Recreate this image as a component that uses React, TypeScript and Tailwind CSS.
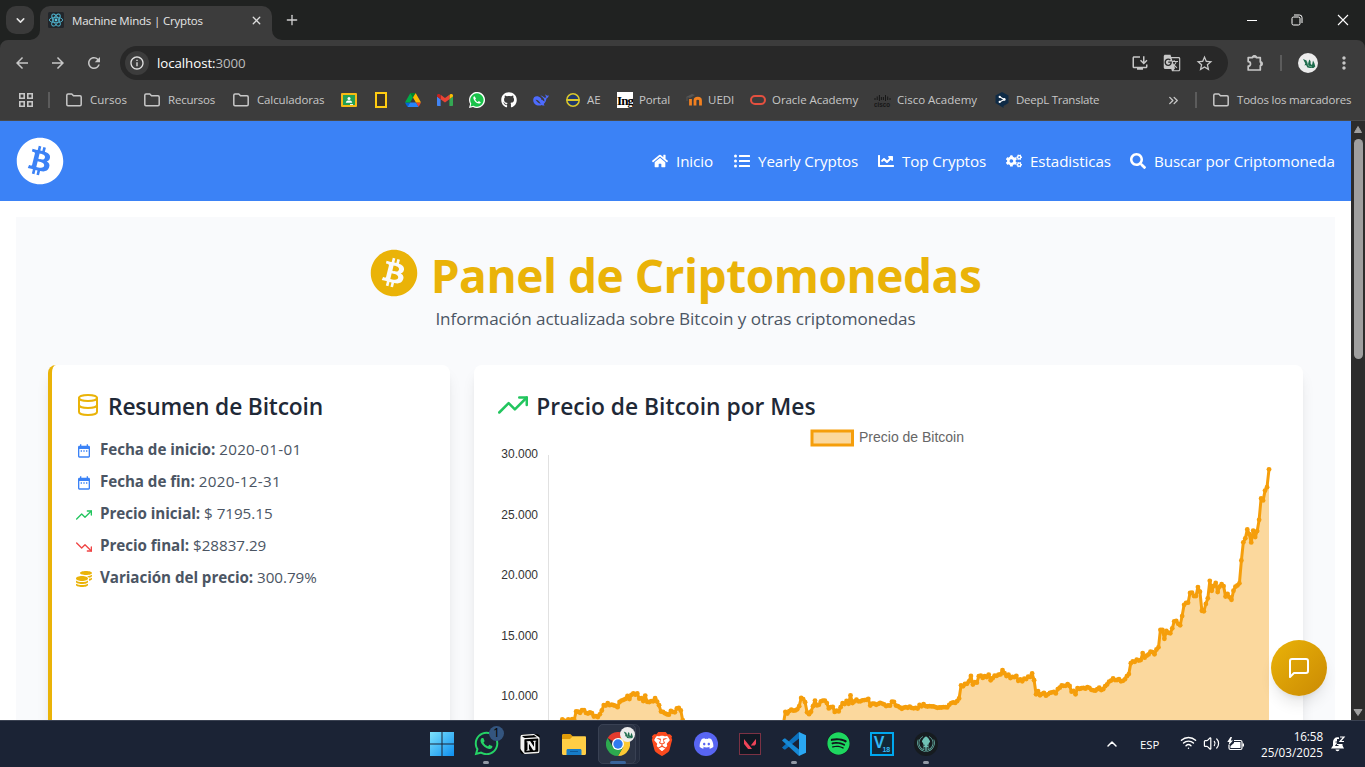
import React from 'react';
import {
  FaBitcoin, FaHome, FaListUl, FaChartLine, FaCogs, FaSearch, FaCoins, FaWhatsapp, FaGithub, FaDiscord, FaSpotify, FaGitkraken,
} from 'react-icons/fa';
import { FiTrendingUp, FiTrendingDown, FiMessageSquare } from 'react-icons/fi';
import {
  MdDateRange, MdArrowBack, MdArrowForward, MdRefresh, MdInfoOutline, MdInstallDesktop, MdGTranslate, MdStarBorder, MdMoreVert,
} from 'react-icons/md';
import { SiBrave, SiNotion, SiValorant } from 'react-icons/si';
import { Database, ChevronDown, ChevronUp, X, Plus, Wifi, Volume2, ChevronsRight } from 'lucide-react';

/* Daily price of Bitcoin, 2020-01-01 to 2020-12-31 */
const PRICES = [
  7195, 7200, 6985, 7345, 7411, 7411, 7769, 8164, 8080, 7879, 8166, 8038, 8192, 8144, 8828, 8807, 8724, 8929, 8942, 8706, 8657, 8746, 8680, 8406, 8445, 8368, 8597, 8909, 9358, 9316, 9508, 9351,
  9393, 9344, 9293, 9180, 9614, 9729, 9795, 9866, 10117, 9857, 10208, 10327, 10214, 10312, 9889, 9934, 9691, 10142, 9634, 9608, 9686, 9664, 9924, 9650, 9342, 8820, 8785, 8672, 8599,
  8562, 8870, 8788, 8755, 9078, 9123, 8909, 8108, 7924, 7909, 7911, 4971, 5563, 5200, 5393, 5014, 5226, 5239, 6191, 6199, 6186, 5831, 6417, 6734, 6681, 6716, 6469, 6242, 5922, 6430, 6438,
  6606, 6793, 6734, 6868, 6792, 7271, 7176, 7334, 7303, 6865, 6859, 6971, 6845, 6843, 6642, 7117, 7097, 7258, 7189, 6882, 6881, 7117, 7429, 7551, 7569, 7680, 7796, 7807, 8801, 8659,
  8864, 8989, 8897, 8912, 9004, 9269, 9951, 9842, 9594, 8757, 8602, 8805, 9269, 9733, 9328, 9377, 9670, 9727, 9729, 9523, 9082, 9182, 9209, 8790, 8906, 8835, 9181, 9525, 9440, 9700, 9461,
  10167, 9529, 9656, 9801, 9666, 9665, 9746, 9771, 9795, 9870, 9321, 9481, 9476, 9386, 9450, 9538, 9481, 9412, 9278, 9332, 9304, 9648, 9629, 9313, 9265, 9163, 9045, 9144, 9191, 9138,
  9229, 9123, 9087, 9132, 9074, 9376, 9253, 9428, 9278, 9240, 9277, 9243, 9244, 9193, 9133, 9155, 9159, 9185, 9187, 9164, 9374, 9525, 9581, 9537, 9678, 9906, 10991, 10912, 11100, 11111, 11323,
  11760, 11053, 11246, 11205, 11747, 11780, 11601, 11754, 11676, 11878, 11411, 11584, 11784, 11769, 11866, 11892, 12254, 11991, 11758, 11878, 11593, 11681, 11664, 11774, 11366, 11488, 11323, 11542, 11506, 11711, 11680,
  11971, 11415, 10245, 10511, 10169, 10280, 10369, 10132, 10243, 10363, 10401, 10442, 10323, 10680, 10797, 10975, 10948, 10945, 11094, 10938, 10462, 10539, 10246, 10760, 10693, 10750, 10775, 10710, 10845, 10784,
  10620, 10576, 10549, 10669, 10793, 10604, 10669, 10916, 11064, 11296, 11384, 11556, 11426, 11430, 11503, 11323, 11359, 11484, 11743, 11916, 12823, 12965, 12932, 13108, 13031, 13075, 13654, 13271, 13438, 13546, 13781,
  13737, 13550, 13950, 14133, 15580, 15565, 14834, 15480, 15333, 15290, 15702, 16277, 16318, 16069, 15956, 16716, 17646, 17804, 17817, 18621, 18642, 18370, 18365, 19107, 18733, 17151, 17108, 17717, 18177, 19626,
  18803, 19202, 19445, 18699, 19154, 19345, 19192, 18321, 18554, 18264, 18059, 18804, 19142, 19247, 19417, 21311, 22805, 23138, 23870, 23478, 22803, 23783, 23241, 23736, 24665, 26437, 26272, 27085, 27362, 28837,
];

function PriceChart() {
  const n = PRICES.length;
  const pts = PRICES.map((v, i) => [50.5 + (i * 720.5) / (n - 1), 272.3 - (v - 10000) * 0.0121]);
  const line = pts.map(([x, y]) => `${x.toFixed(1)},${y.toFixed(1)}`).join(' ');
  const ticks: [string, number][] = [['30.000', 33], ['25.000', 94], ['20.000', 154], ['15.000', 215], ['10.000', 275]];
  return (
    <svg width="781" height="400" viewBox="0 0 781 400" className="block shrink-0 font-['Liberation_Sans',Arial,sans-serif]">
      <rect x="314" y="6" width="40.5" height="14" fill="#fbd89d" stroke="#f59e0b" strokeWidth="3" />
      <text x="361" y="17" fontSize="14" fill="#666" textLength="105">Precio de Bitcoin</text>
      {ticks.map(([t, y]) => (
        <text key={t} x="40" y={y} textAnchor="end" fontSize="12" fill="#333">{t}</text>
      ))}
      <path d="M50.5 30V400" stroke="#e1e1e1" />
      <polygon points={`50.5,400 ${line} 771,400`} fill="#f59e0b" fillOpacity="0.4" />
      <polyline points={line} fill="none" stroke="#f59e0b" strokeWidth="3" strokeLinejoin="round" />
      {pts.map(([x, y], i) => <circle key={i} cx={x} cy={y} r="2.4" fill="#f59e0b" />)}
    </svg>
  );
}

const Folder = () => (
  <svg width="16" height="14" viewBox="0 0 16 14" fill="none" stroke="#c7c7c7" strokeWidth="1.5" strokeLinejoin="round">
    <path d="M.8 2.2C.8 1.4 1.3 1 2 1h3.8l1.7 1.8H14c.8 0 1.200.5 1.200 1.200v7.500c0 .8-.4 1.200-1.200 1.200H2c-.8 0-1.200-.4-1.200-1.200Z" />
  </svg>
);

const Puzzle = () => (
  <svg width="18" height="18" viewBox="0 0 18 18" fill="none" stroke="#c7c7c7" strokeWidth="1.700" strokeLinejoin="round" className="ml-[18px] shrink-0">
    <path d="M2.200 3.600H6.500a1.900 1.700 0 0 1 3.800 0h4v4.300a1.700 1.900 0 0 1 0 3.800v4.300H2.200v-3.800a2.300 2.300 0 0 0 0-4.600Z" />
    <path d="M6.500 3.300a1.900 1.700 0 0 1 3.800 0ZM14.600 7.900a1.700 1.900 0 0 1 0 3.800Z" fill="#c7c7c7" strokeWidth=".8" />
  </svg>
);

const Classroom = () => (
  <svg width="16" height="14" viewBox="0 0 16 14">
    <rect width="16" height="14" rx="1" fill="#f5ba15" />
    <rect x="2" y="2" width="12" height="10" fill="#23a055" />
    <circle cx="8" cy="5.500" r="1.500" fill="#fff" />
    <path d="M4.800 9.800c0-1.600 1.500-2.200 3.200-2.200s3.200.6 3.200 2.200Z" fill="#fff" />
    <path d="M9 11h3v1H9z" fill="#e8f5e9" />
  </svg>
);
const Drive = () => (
  <svg width="16" height="14" viewBox="0 0 87.300 78">
    <path d="m6.600 66.850 3.850 6.650c.8 1.400 1.950 2.500 3.300 3.300l13.750-23.800h-27.500c0 1.550.4 3.100 1.200 4.500z" fill="#0066da" />
    <path d="m43.650 25-13.750-23.800c-1.350.8-2.500 1.900-3.300 3.300l-25.400 44a9 9 0 0 0-1.200 4.500h27.500z" fill="#00ac47" />
    <path d="m73.550 76.800c1.350-.8 2.500-1.900 3.300-3.300l1.600-2.750 7.650-13.250c.8-1.400 1.200-2.950 1.200-4.500h-27.500l5.850 11.500z" fill="#ea4335" />
    <path d="m43.650 25 13.750-23.800c-1.350-.8-2.900-1.200-4.500-1.200h-18.500c-1.600 0-3.150.45-4.500 1.200z" fill="#00832d" />
    <path d="m59.800 53h-32.300l-13.750 23.800c1.350.8 2.900 1.200 4.500 1.200h50.800c1.600 0 3.150-.45 4.500-1.200z" fill="#2684fc" />
    <path d="m73.400 26.500-12.700-22c-.8-1.400-1.950-2.500-3.300-3.300l-13.750 23.800 16.150 28h27.450c0-1.550-.4-3.100-1.200-4.500z" fill="#ffba00" />
  </svg>
);
const Gmail = () => (
  <svg width="16" height="12" viewBox="0 0 16 12">
    <path d="M0 2.500V11c0 .6.400 1 1 1h2.600V5.200Z" fill="#4285f4" />
    <path d="M16 2.500V11c0 .6-.4 1-1 1h-2.600V5.200Z" fill="#34a853" />
    <path d="M12.400 1v4.300L16 2.600V1.600c0-1.500-1.700-2.100-2.700-1.300Z" fill="#fbbc04" />
    <path d="M3.600 5.300V.8L8 4.100 12.400.8v4.500L8 8.600Z" fill="#ea4335" />
    <path d="M0 1.600v1l3.600 2.700V1L2.700.3C1.700-.5 0 .1 0 1.600Z" fill="#c5221f" />
  </svg>
);
const WhatsappBadge = () => (
  <svg width="16" height="16" viewBox="0 0 16 16">
    <path d="M0 16l1.100-4A8 8 0 1 1 4 14.900Z" fill="#fff" />
    <path d="M1.500 14.600l.8-2.900a6.700 6.700 0 1 1 2.200 2.100Z" fill="#19c24a" />
    <path d="M5.500 4.300c-.9.200-1.300 1-1.100 2 .5 2.500 2.900 5 5.400 5.300 1 .1 1.800-.4 2-1.300l-2-1.200-.9.900C7.600 9.500 6.700 8.600 6.200 7.400l.8-1Z" fill="#fff" />
  </svg>
);
const DeepSeek = () => (
  <svg width="16" height="12" viewBox="0 0 16 12">
    <path d="M15.700 1.200c-.9.700-1.600.6-2.300 0-.6-.5-.6-.9-1-1 .1 1.400.3 2.200 1 2.900-.5.800-1.500.8-2.400.1C9.800 2.200 8.500 1.800 7.300 1.200c1 1.200 2.300 1.700 3.200 3 .7 1.100 1 2 .9 3.300C9.500 6.700 7.800 3 4.800 2.300 2 1.700.2 3.500.2 6c0 3.200 2.600 5.600 5.800 5.600 1.200 0 2-.3 2.800-.7.900.5 1.900.8 2.900.3-.5-.4-.9-.7-.9-1.300 1.500-1.400 2.500-3.400 2.600-5.500 1.300-.4 2.200-1.500 2.300-3.200ZM7.700 9.700C5.300 9.400 3.900 7 2.500 5.700c2-.3 4.200 2 5.200 4Z" fill="#4d6bfe" fillRule="evenodd" />
    <circle cx="8.800" cy="5" r=".8" fill="#3c3c3c" />
  </svg>
);
const AeLogo = () => (
  <svg width="16" height="16" viewBox="0 0 16 16">
    <circle cx="8" cy="8" r="6.200" fill="#20386b" stroke="#d9c72b" strokeWidth="1.500" />
    <path d="M1.500 8h13" stroke="#d9c72b" strokeWidth="2" />
  </svg>
);
const Moodle = () => (
  <svg width="17" height="12" viewBox="0 0 17 12">
    <path d="M0 3 6 0l3 1-5 3Z" fill="#555" />
    <path d="M1 3v4" stroke="#555" />
    <path d="M4.500 11.500V5M9 11.500V6.500c0-3 5.500-3 5.500 0v5" stroke="#f28020" strokeWidth="2.800" fill="none" />
  </svg>
);
const Cisco = () => (
  <svg width="17" height="13" viewBox="0 0 17 13">
    <path d="M1 4v2M3.200 2.500V6M5.400 1v6M7.400 3v3M9.400 3v3M11.500 1v6M13.700 2.500V6M16 4v2" stroke="#171717" />
    <text x="0" y="12.500" fontSize="7" fontWeight="700" fill="#171717" textLength="16" lengthAdjust="spacingAndGlyphs" fontFamily="Liberation Sans">cisco</text>
  </svg>
);
const DeepL = () => (
  <svg width="14" height="16" viewBox="0 0 14 16">
    <path d="M7 0l6.500 3.600v7.500L8.500 14v2l-2.300-1.400L.5 11.100V3.600Z" fill="#0f2b46" />
    <path d="M4.500 4.700 9.300 7.400 4.500 10.100" stroke="#fff" strokeWidth="1.200" fill="none" />
    <circle cx="9.300" cy="7.400" r="1.300" fill="#fff" /><circle cx="4.700" cy="4.900" r="1.100" fill="#fff" /><circle cx="4.700" cy="9.900" r="1.100" fill="#fff" />
  </svg>
);
const Atom = () => (
  <svg width="16" height="16" viewBox="0 0 16 16">
    <rect width="16" height="16" rx="1.500" fill="#22262b" />
    <g fill="none" stroke="#4fb4cf" strokeWidth=".9">
      <ellipse cx="8" cy="8" rx="6.700" ry="2.700" />
      <ellipse cx="8" cy="8" rx="6.700" ry="2.700" transform="rotate(60 8 8)" />
      <ellipse cx="8" cy="8" rx="6.700" ry="2.700" transform="rotate(120 8 8)" />
    </g>
    <circle cx="8" cy="8" r="1.400" fill="#5cc5e0" />
  </svg>
);
const Dragon = ({ size }: { size: number }) => (
  <svg width={size} height={size} viewBox="0 0 20 20">
    <circle cx="10" cy="10" r="10" fill="#ececec" />
    <path d="M5 6l3.500 1.500L10 11l1.200-4.500L12.500 8l.2 3 1.300 1 1-4.500 1.300 2.500 1 3.500-1.800 1.500H12l-2.500-.5L8 12l-1.500.5.800-2Z" fill="#1d6b4c" />
    <path d="M9 8.500l1.500 4.500 3.500 1" stroke="#9fc8b4" strokeWidth=".6" fill="none" />
  </svg>
);

type Mark = { icon: React.ReactNode; label?: string; box: string };
const MARKS: Mark[] = [
  { icon: <Folder />, label: 'Cursos', box: 'w-[78px] gap-2' },
  { icon: <Folder />, label: 'Recursos', box: 'w-[89px] gap-2 tracking-[-0.2px]' },
  { icon: <Folder />, label: 'Calculadoras', box: 'w-[108px] gap-2 tracking-[-0.13px]' },
  { icon: <Classroom />, box: 'w-[34px]' },
  { icon: <span className="h-4 w-3 border-2 border-[#fc1] bg-[#3c3428]" />, box: 'w-[30px]' },
  { icon: <Drive />, box: 'w-8' },
  { icon: <Gmail />, box: 'w-8' },
  { icon: <WhatsappBadge />, box: 'w-8' },
  { icon: <FaGithub size={16} color="#fff" />, box: 'w-8' },
  { icon: <DeepSeek />, box: 'w-8' },
  { icon: <AeLogo />, label: 'AE', box: 'w-[52px] gap-1.5' },
  { icon: <span className="flex h-4 w-4 items-center justify-center overflow-hidden bg-white font-['Liberation_Serif',serif] text-[13px] font-bold leading-none tracking-[-1px] text-black">Ing</span>, label: 'Portal', box: 'w-[69px] gap-1.5 tracking-[-0.15px]' },
  { icon: <Moodle />, label: 'UEDI', box: 'w-16 gap-[5px]' },
  { icon: <span className="h-2.5 w-4 rounded-full border-2 border-[#e4503f]" />, label: 'Oracle Academy', box: 'w-[124px] gap-1.5 tracking-[-0.06px]' },
  { icon: <Cisco />, label: 'Cisco Academy', box: 'w-[121px] gap-1.5' },
  { icon: <DeepL />, label: 'DeepL Translate', box: 'w-[173px] gap-[7px] tracking-[-0.26px]' },
];

function Browser() {
  return (
    <div className="shrink-0 bg-[#3c3c3c] text-[#c7c7c7]">
      <div className="flex h-10 items-start bg-[#202221] px-1.5">
        <div className="mt-1.5 flex h-7 w-7 items-center justify-center rounded-[10px] bg-[#3a3a3a]">
          <ChevronDown size={13} strokeWidth={2.800} color="#e3e3e3" />
        </div>
        <div className="relative ml-1.5 mt-1.5 flex h-[34px] w-[232px] items-center rounded-t-[10px] bg-[#3c3c3c] pb-1.5 pl-2 pr-2.500">
          <svg className="absolute -left-2.5 bottom-0" width="10" height="10"><path d="M10 0v10H0A10 10 0 0 0 10 0" fill="#3c3c3c" /></svg>
          <svg className="absolute -right-2.5 bottom-0" width="10" height="10"><path d="M0 0v10h10A10 10 0 0 1 0 0" fill="#3c3c3c" /></svg>
          <Atom />
          <span className="ml-2 pt-0.5 text-[11.5px] tracking-[-0.18px] text-[#e6e6e6]">Machine Minds | Cryptos</span>
          <X size={13} strokeWidth={2.400} color="#dcdcdc" className="ml-auto mr-[9px]" />
        </div>
        <Plus size={16} strokeWidth={2} color="#cfcfcf" className="ml-3 mt-3" />
        <div className="ml-auto mr-2.5 mt-[14px] flex items-center gap-[34px]">
          <span className="h-px w-2.5 bg-white" />
          <svg width="12" height="12" viewBox="0 0 12 12" fill="none" stroke="#fff"><rect x="1" y="3" width="8" height="8" rx="1.500" /><path d="M3 1h5.500A2.500 2.500 0 0 1 11 3.500V9" /></svg>
          <svg width="12" height="12" viewBox="0 0 12 12" stroke="#fff" strokeWidth="1.100"><path d="M1 1l10 10M11 1 1 11" /></svg>
        </div>
      </div>
      <div className="relative flex h-10 items-center pl-[13px] pt-1.5">
        <svg className="absolute left-0 top-0" width="8" height="8"><path d="M0 0h8A8 8 0 0 0 0 8" fill="#202221" /></svg>
        <svg className="absolute right-0 top-0" width="8" height="8"><path d="M8 0H0A8 8 0 0 1 8 8" fill="#202221" /></svg>
        <MdArrowBack size={18} />
        <MdArrowForward size={18} className="ml-[18px]" />
        <MdRefresh size={18} className="ml-[18px]" />
        <div className="ml-[17px] flex h-[34px] w-[1108px] items-center rounded-full bg-[#282828] pl-[5px] pr-[14px]">
          <span className="flex h-6 w-6 items-center justify-center rounded-full bg-[#3c3c3c]"><MdInfoOutline size={16} color="#e0e0e0" /></span>
          <span className="ml-2 pt-px text-[13.3px] tracking-[-0.07px] text-[#bdbdbd]"><span className="text-white">localhost:</span>3000</span>
          <span className="ml-auto flex items-center">
            <MdInstallDesktop size={18} className="mr-[14px]" /><MdGTranslate size={18} className="mr-[14px]" /><MdStarBorder size={19} />
          </span>
        </div>
        <Puzzle />
        <span className="ml-4 h-4 w-0.5 bg-[#5c5c5c]" />
        <span className="ml-4"><Dragon size={20} /></span>
        <MdMoreVert size={20} className="ml-4" />
      </div>
      <div className="flex h-[41px] items-center border-b border-[#4a4a4a] pl-[19px] text-[11.5px]">
        <svg width="14" height="14" viewBox="0 0 14 14" fill="none" stroke="#c7c7c7" strokeWidth="1.600"><path d="M.8.800h4.400v4.400H.8zM8.800.800h4.400v4.400H8.800zM.8 8.800h4.400v4.400H.8zM8.800 8.800h4.400v4.400H8.800z" /></svg>
        <span className="ml-[15px] mr-4 h-4 w-0.5 bg-[#5c5c5c]" />
        {MARKS.map((m, i) => (
          <div key={i} className={`flex shrink-0 items-center whitespace-nowrap ${m.box}`}>
            {m.icon}{m.label && <span>{m.label}</span>}
          </div>
        ))}
        <ChevronsRight size={15} strokeWidth={2.200} className="-ml-0.5 shrink-0" />
        <span className="ml-3.5 h-4 w-0.5 shrink-0 bg-[#5c5c5c]" />
        <div className="ml-4 flex items-center gap-2 whitespace-nowrap tracking-[-0.2px]"><Folder /><span>Todos los marcadores</span></div>
      </div>
    </div>
  );
}

const NAV: [React.ReactNode, string, string][] = [
  [<FaHome size={16} />, 'Inicio', 'w-[82px]'],
  [<FaListUl size={16} />, 'Yearly Cryptos', 'w-36'],
  [<FaChartLine size={16} />, 'Top Cryptos', 'w-32'],
  [<FaCogs size={16} />, 'Estadisticas', 'w-[124px]'],
  [<FaSearch size={16} className="shrink-0" />, 'Buscar por Criptomoneda', 'w-[205px]'],
];

const SUMMARY: [React.ReactNode, string, string, string][] = [
  [<MdDateRange size={16} color="#3b82f6" />, 'Fecha de inicio:', '2020-01-01', 'tracking-[0.3px]'],
  [<MdDateRange size={16} color="#3b82f6" />, 'Fecha de fin:', '2020-12-31', 'tracking-[0.3px]'],
  [<FiTrendingUp size={16} color="#22c55e" />, 'Precio inicial:', '$ 7195.15', 'tracking-[-0.03px]'],
  [<FiTrendingDown size={16} color="#ef4444" />, 'Precio final:', '$28837.29', 'tracking-[-0.03px]'],
  [<FaCoins size={16} color="#eab308" />, 'Variación del precio:', '300.79%', 'tracking-[-0.03px]'],
];

function Page() {
  return (
    <div className="flex min-h-0 flex-1 overflow-hidden bg-white">
      <div className="relative h-full w-[1351px] overflow-hidden">
        <header className="flex h-20 items-center justify-between bg-[#3b82f6] px-4 text-white">
          <FaBitcoin size={48} />
          <nav className="flex text-[15.2px] font-medium tracking-[-0.1px]">
            {NAV.map(([icon, label, w]) => (
              <span key={label} className={`flex items-center gap-2 whitespace-nowrap ${w}`}>{icon}<span>{label}</span></span>
            ))}
          </nav>
        </header>
        <main className="m-4 bg-[#f9fafc] p-8">
          <div className="mb-8 flex h-[84px] flex-col items-center">
            <h1 className="flex h-14 items-start gap-[13px] whitespace-nowrap text-[46px] font-bold leading-[53px] tracking-[-0.47px] text-[#eab308]">
              <FaBitcoin size={48} className="shrink-0" />Panel de Criptomonedas
            </h1>
            <p className="pt-px text-[17.1px] leading-7 tracking-[-0.06px] text-[#4b5563]">Información actualizada sobre Bitcoin y otras criptomonedas</p>
          </div>
          <div className="grid grid-cols-3 gap-6">
            <section className="h-[600px] rounded-lg border-l-4 border-[#eab308] bg-white p-6 shadow-lg">
              <h2 className="flex h-9 items-center gap-2 text-[22.8px] font-semibold tracking-[-0.18px] text-[#1f2937]">
                <Database size={24} color="#eab308" className="-mt-1" />Resumen de Bitcoin
              </h2>
              <ul className="mt-3 flex flex-col gap-2 text-[15.2px] text-[#4b5563]">
                {SUMMARY.map(([icon, label, value, spacing]) => (
                  <li key={label} className="flex h-6 items-center gap-2">
                    <span className="mt-1">{icon}</span>
                    <span><strong className="tracking-[-0.06px]">{label}</strong> <span className={spacing}>{value}</span></span>
                  </li>
                ))}
              </ul>
            </section>
            <section className="col-span-2 h-[600px] rounded-lg bg-white p-6 shadow-lg">
              <h2 className="flex h-9 items-center gap-2 text-[22.8px] font-semibold text-[#1f2937]">
                <FiTrendingUp size={30} color="#22c55e" className="-mt-1" />Precio de Bitcoin por Mes
              </h2>
              <PriceChart />
            </section>
          </div>
        </main>
        <button className="absolute bottom-6 right-6 flex h-14 w-14 items-center justify-center rounded-full bg-linear-to-br from-[#eab308] to-[#ca8a04] text-white shadow-lg">
          <FiMessageSquare size={24} />
        </button>
      </div>
      <div className="flex w-3.5 flex-col items-center bg-[#2c2c2c] pb-1 pt-[5px]">
        <svg width="8" height="7"><path d="M4 .500 7.500 6.500h-7Z" fill="#9f9f9f" stroke="#9f9f9f" /></svg>
        <span className="mt-1.5 h-[220px] w-[9px] rounded-full bg-[#9f9f9f]" />
        <svg width="10" height="7" className="mt-auto"><path d="M5 6.500 1 .500h8Z" fill="#9f9f9f" stroke="#9f9f9f" /></svg>
      </div>
    </div>
  );
}

const Chrome = () => (
  <svg width="24" height="24" viewBox="0 0 24 24">
    <path d="M12 12 1.600 6A12 12 0 0 1 22.400 6Z" fill="#e33b2e" />
    <path d="M12 12V6h10.400A12 12 0 0 1 12 24l5.200-9Z" fill="#fcc934" />
    <path d="M12 12l5.200 3L12 24A12 12 0 0 1 1.600 6l5.200 9Z" fill="#2da94f" />
    <circle cx="12" cy="12" r="6" fill="#fff" /><circle cx="12" cy="12" r="4.700" fill="#2f7bf0" />
  </svg>
);

function Taskbar() {
  const cell = 'relative flex h-10 w-11 items-center justify-center';
  const dot = 'absolute bottom-0 h-[3px] w-1.5 rounded-full bg-[#9299a5]';
  return (
    <footer className="flex h-[47px] shrink-0 items-center border-t border-[#3b4252] bg-[#1b2335] pb-px text-white">
      <div className="ml-[420px] flex">
        <span className={cell}>
          <svg width="24" height="24" viewBox="0 0 24 24">
            <defs><linearGradient id="win" x1="0" y1="0" x2="1" y2="1"><stop stopColor="#7de3fb" /><stop offset="1" stopColor="#0d8ef0" /></linearGradient></defs>
            <path d="M0 0h11.500v11.500H0zM12.500 0H24v11.500H12.500zM0 12.500h11.500V24H0zM12.500 12.500H24V24H12.500z" fill="url(#win)" />
          </svg>
        </span>
        <span className={cell}>
          <FaWhatsapp size={27} color="#25d366" />
          <span className="absolute right-[4px] top-[2px] flex h-[15px] w-[15px] items-center justify-center rounded-full bg-[#34557f] text-[12px] text-black">1</span>
          <span className={dot} />
        </span>
        <span className={cell}><SiNotion size={20} color="#f2f2f2" className="rounded-[4px] bg-black" /></span>
        <span className={cell}>
          <svg width="24" height="22" viewBox="0 0 24 22">
            <path d="M0 2.500C0 1.500.6 1 1.500 1h6.800L11 3.500V8H0Z" fill="#e09b08" />
            <path d="M0 6h8l2.800-2.700h12c.8 0 1.200.5 1.200 1.200v16c0 .9-.5 1.500-1.500 1.500h-21C.5 22 0 21.400 0 20.500Z" fill="#ffce45" />
            <path d="M4.500 22v-4.500c0-1 .6-1.500 1.500-1.500h12c.9 0 1.500.5 1.500 1.500V22Z" fill="#167cc8" /><path d="M8 18.500h8" stroke="#0c5a9c" />
          </svg>
        </span>
        <span className={cell}>
          <span className="absolute -right-0 bottom-0 left-[2px] top-0 rounded-[5px] border border-[#303849] bg-[#242c3e]" />
          <span className="absolute bottom-0 left-[2px] right-1 top-0 rounded-[5px] border border-[#394153] bg-[#2b3344]" />
          <span className="relative"><Chrome /></span>
          <span className="absolute right-[5px] top-[3px]"><Dragon size={15} /></span>
          <span className="absolute bottom-0 h-[3px] w-4 rounded-full bg-[#39649b]" />
        </span>
        <span className={cell}>
          <span className="relative flex h-6 w-6 items-center justify-center">
            <svg className="absolute" width="18" height="20" viewBox="0 0 18 20"><path d="M3 1h12l2 5-2 10-6 4-6-4L1 6Z" fill="#fff" /></svg>
            <SiBrave size={24} color="#fb4a1e" className="relative" />
          </span>
        </span>
        <span className={cell}><span className="flex h-6 w-6 items-center justify-center rounded-full bg-[#5865f2]"><FaDiscord size={15} /></span></span>
        <span className={cell}><span className="flex h-[22px] w-[22px] items-center justify-center border border-[#7b3244] bg-[#101823]"><SiValorant size={12} color="#ef4458" /></span></span>
        <span className={cell}>
          <svg width="24" height="24" viewBox="0 0 24 24">
            <path d="M17 0 24 3.200v17.600L17 24Z" fill="#2aa7f2" />
            <path d="M17 0v6.500L3 17.800 1.500 17 0 15.500Z" fill="#0b70bd" />
            <path d="M17 24v-6.500L3 6.200 1.500 7 0 8.500Z" fill="#1688d4" />
          </svg>
          <span className={dot} />
        </span>
        <span className={cell}><span className="rounded-full bg-[#10131a]"><FaSpotify size={23} color="#1ed760" /></span></span>
        <span className={cell}>
          <span className="flex h-6 w-6 items-start justify-center border-2 border-[#00a8ef] bg-[#122838] leading-none text-[#35b9f5]">
            <span className="font-['Liberation_Sans',sans-serif] text-[16px] font-bold leading-[18px]">V</span><span className="-ml-0.5 mt-3 font-['Liberation_Sans',sans-serif] text-[7px] font-bold">18</span>
          </span>
        </span>
        <span className={cell}>
          <span className="flex h-6 w-6 items-center justify-center rounded-full bg-[#161b1f]"><FaGitkraken size={18} color="#6fc2b6" /></span>
          <span className={dot} />
        </span>
      </div>
      <div className="ml-auto mr-[19px] flex items-center">
        <ChevronUp size={16} strokeWidth={2.200} />
        <span className="ml-[20px] w-10 pt-0.5 text-[11.4px]">ESP</span>
        <Wifi size={17} strokeWidth={2} className="-mt-0.5" />
        <Volume2 size={17} strokeWidth={1.700} className="ml-1.5" />
        <svg width="17" height="14" viewBox="0 0 17 14" className="ml-[7px]">
          <path d="M7 3.500h6.500c.8 0 1.500.6 1.500 1.500v6c0 .9-.7 1.500-1.500 1.500h-10C2.600 12.500 2 11.900 2 11V8" fill="none" stroke="#fff" strokeWidth="1.200" />
          <path d="M7 5h6.500v6h-10V9L7 6ZM15.500 6.500H17v3h-1.500zM3.500 0 .3 5h2L1.500 8.500 6 3.500H3.800L5 0Z" fill="#fff" />
        </svg>
        <div className="ml-[17px] flex w-[62px] flex-col items-end whitespace-nowrap text-[11.7px] leading-4"><span className="tracking-[-0.1px]">16:58</span><span>25/03/2025</span></div>
        <svg width="16" height="16" viewBox="0 0 16 16" className="ml-[7px]">
          <path d="M9 1.500C5.500.600 3 3 3 6v3.500L1 12.500h13l-1.500-3V8H7V3h2ZM5.500 13.500h4c-.3 2.200-3.700 2.200-4 0Z" fill="#fff" />
          <path d="M10 1h4l-4 4.500h4" fill="none" stroke="#fff" strokeWidth="1.200" /><path d="M5.500 6h3L5.500 9.500h3" fill="none" stroke="#1b2335" strokeWidth="1" />
        </svg>
      </div>
    </footer>
  );
}

export default function App() {
  return (
    <div className="flex h-[767px] w-[1365px] flex-col overflow-hidden font-['Open_Sans','Noto_Sans',sans-serif]">
      <Browser />
      <Page />
      <Taskbar />
    </div>
  );
}
